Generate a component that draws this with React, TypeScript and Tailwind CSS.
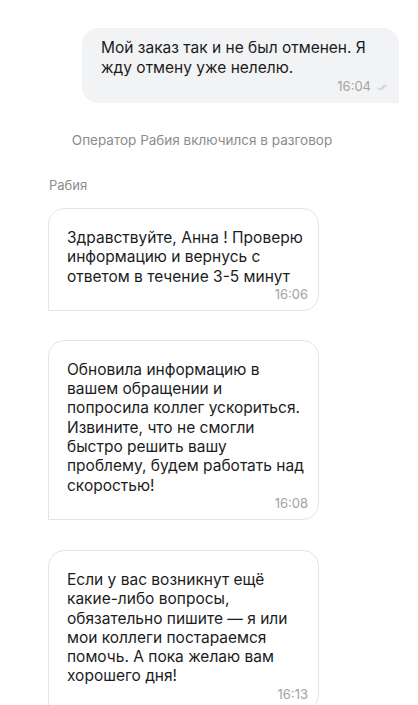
const operatorMessages = [
  {
    text: 'Здравствуйте, Анна ! Проверю\nинформацию и вернусь с\nответом в течение 3-5 минут',
    time: '16:06',
    gap: 'mt-[13px]',
  },
  {
    text: 'Обновила информацию в\nвашем обращении и\nпопросила коллег ускориться.\nИзвините, что не смогли\nбыстро решить вашу\nпроблему, будем работать над\nскоростью!',
    time: '16:08',
    gap: 'mt-[29px]',
  },
  {
    text: 'Если у вас возникнут ещё\nкакие-либо вопросы,\nобязательно пишите — я или\nмои коллеги постараемся\nпомочь. А пока желаю вам\nхорошего дня!',
    time: '16:13',
    gap: 'mt-[30px]',
  },
]

function DoubleCheck() {
  return (
    <svg width="11" height="7" viewBox="0 0 11 7" fill="none" stroke="#b5b5b5" strokeWidth="0.9" strokeLinecap="round" strokeLinejoin="round">
      <path d="M0.6 3.8 L2.6 5.8 L7.2 1" />
      <path d="M4.2 5.6 L4.4 5.8 L9.4 1" />
    </svg>
  )
}

export default function App() {
  return (
    <div className="w-[418px] h-[705px] overflow-hidden bg-white font-['Inter',sans-serif] text-[#1c1c1c]">
      {/* Customer message */}
      <div className="flex justify-end pt-[28px] pr-[19px]">
        <div className="w-[317px] bg-[#f2f3f5] rounded-[16px] rounded-br-none pl-[19px] pr-[11px] pt-[10px] pb-[7px]">
          <p className="text-[15.5px] leading-[20px] whitespace-pre-line">
            {'Мой заказ так и не был отменен. Я\nжду отмену уже нелелю.'}
          </p>
          <div className="flex items-center justify-end gap-[6px] h-[18px] text-[13px] text-[#a3a3a3]">
            <span>16:04</span>
            <DoubleCheck />
          </div>
        </div>
      </div>

      {/* System notice */}
      <p className="mt-[27px] pr-[14px] text-center text-[13.5px] leading-[20px] text-[#8c8c8c]">
        Оператор Рабия включился в разговор
      </p>

      {/* Operator */}
      <div className="pl-[48px] mt-[25px]">
        <p className="pl-[1px] text-[13px] leading-[20px] text-[#8c8c8c]">Рабия</p>
        {operatorMessages.map((m) => (
          <div
            key={m.time}
            className={`${m.gap} w-[271px] bg-white border border-[#e4e4e6] rounded-[16px] rounded-bl-none pl-[18px] pr-[10px] pt-[19px] pb-[6px]`}
          >
            <p className="text-[15.5px] leading-[19.3px] whitespace-pre-line">{m.text}</p>
            <div className="flex justify-end items-center h-[18px] text-[13px] text-[#a3a3a3]">
              {m.time}
            </div>
          </div>
        ))}
      </div>
    </div>
  )
}
